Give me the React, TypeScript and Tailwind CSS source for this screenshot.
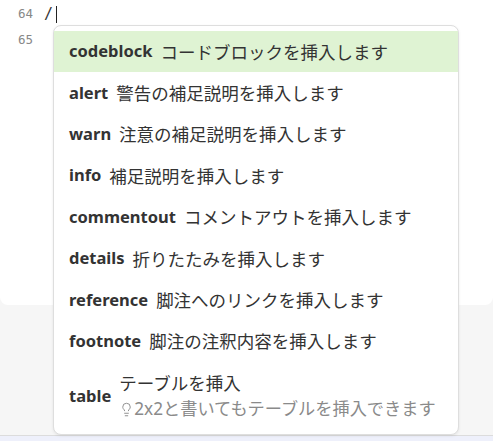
import { Lightbulb } from 'lucide-react';

const items = [
  { key: 'codeblock', desc: 'コードブロックを挿入します' },
  { key: 'alert', desc: '警告の補足説明を挿入します' },
  { key: 'warn', desc: '注意の補足説明を挿入します' },
  { key: 'info', desc: '補足説明を挿入します' },
  { key: 'commentout', desc: 'コメントアウトを挿入します' },
  { key: 'details', desc: '折りたたみを挿入します' },
  { key: 'reference', desc: '脚注へのリンクを挿入します' },
  { key: 'footnote', desc: '脚注の注釈内容を挿入します' },
];

const font = { fontFamily: '"Noto Sans", "Noto Sans CJK JP", sans-serif' };

export default function App() {
  return (
    <div className="w-[493px] h-[441px] relative overflow-hidden bg-[#f6f6f6]" style={font}>
      {/* Editor */}
      <div className="h-[305px] bg-white rounded-b-lg">
        <div className="pt-[1px] font-['DejaVu_Sans_Mono',monospace] text-[12.5px] leading-[26px] text-[#888]">
          <div className="flex">
            <span className="w-[33px] text-right">64</span>
            <span className="ml-[11px] text-[15px] text-[#333]">/</span>
            <span className="ml-[3px] mt-[5px] h-[17px] w-px bg-[#222]" />
          </div>
          <div className="flex">
            <span className="w-[33px] text-right">65</span>
          </div>
        </div>
      </div>
      <div className="absolute bottom-0 left-0 right-0 h-[6px] border-t border-[#dcdcdc] bg-[#eef0fb]" />

      {/* Completion popup */}
      <div className="absolute left-[53px] top-[25px] w-[406px] h-[410px] bg-white border border-[#dedede] rounded-lg shadow-[0_1px_3px_rgba(0,0,0,0.08)] py-[5px] text-[#333]">
        {items.map((it, i) => (
          <div
            key={it.key}
            className={`flex items-center h-[41.4px] px-[15px] text-[17.5px] whitespace-nowrap ${i === 0 ? 'bg-[#dff3d3]' : ''}`}
          >
            <span className="font-bold text-[16.5px]">{it.key}</span>
            <span className="ml-[8px]">{it.desc}</span>
          </div>
        ))}
        <div className="flex items-center h-[68px] px-[15px] whitespace-nowrap">
          <span className="font-bold text-[16.5px]">table</span>
          <div className="ml-[8px] flex flex-col leading-[26px]">
            <span className="text-[17.5px]">テーブルを挿入</span>
            <span className="flex items-center text-[17.2px] text-[#8a8a8a]">
              <Lightbulb size={15} strokeWidth={1.5} />
              2x2と書いてもテーブルを挿入できます
            </span>
          </div>
        </div>
      </div>
    </div>
  );
}
